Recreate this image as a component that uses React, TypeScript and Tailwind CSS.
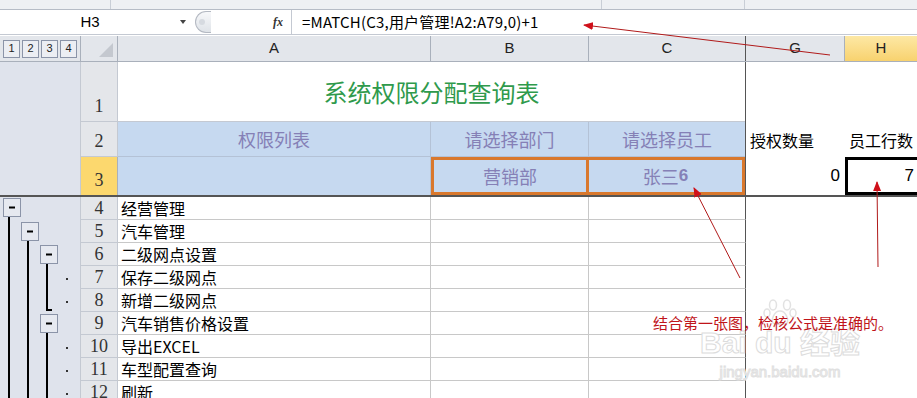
import React from 'react';

const cjk = { fontFamily: '"Noto Sans CJK SC", "Liberation Sans", sans-serif' };
const serif = { fontFamily: '"Liberation Serif", "Noto Sans CJK SC", serif' };
const sans = { fontFamily: '"Liberation Sans", "Noto Sans CJK SC", sans-serif' };

const rows = [
  { n: 4, text: '经营管理' },
  { n: 5, text: '汽车管理' },
  { n: 6, text: '二级网点设置' },
  { n: 7, text: '保存二级网点' },
  { n: 8, text: '新增二级网点' },
  { n: 9, text: '汽车销售价格设置' },
  { n: 10, text: '导出EXCEL' },
  { n: 11, text: '车型配置查询' },
  { n: 12, text: '刷新' },
];

function OutlineTree() {
  // outline (group) symbols for rows 4..12, drawn as one picture
  const box = (x: number, y: number) => (
    <g key={`${x}-${y}`}>
      <rect x={x + 0.5} y={y + 0.5} width={17} height={18} fill="#e6e9f0" stroke="#8b94a8" />
      <line x1={x + 6} y1={y + 9.5} x2={x + 12} y2={y + 9.5} stroke="#000" strokeWidth={2} />
    </g>
  );
  const dot = (y: number) => <rect key={y} x={66} y={y} width={2} height={2} fill="#333" />;
  return (
    <svg width={81} height={203} className="block">
      <line x1={9} y1={20} x2={9} y2={203} stroke="#000" strokeWidth={2} />
      <line x1={28} y1={44} x2={28} y2={203} stroke="#000" strokeWidth={2} />
      <polyline points="47,67 47,113 52,113" fill="none" stroke="#000" strokeWidth={2} />
      <line x1={47} y1={136} x2={47} y2={203} stroke="#000" strokeWidth={2} />
      {box(3, 1)}
      {box(21, 25)}
      {box(40, 48)}
      {box(40, 117)}
      {[81, 104, 150, 173, 196].map(dot)}
    </svg>
  );
}

export default function App() {
  return (
    <div className="relative w-[917px] h-[398px] overflow-hidden bg-white" style={cjk}>
      {/* ribbon remnant */}
      <div className="flex h-[10px] bg-[#eef0f3] border-b border-[#b6bcc6]">
        <div className="w-[111px] border-r border-[#c9ced6]" />
        <div className="w-[491px] border-r border-[#c9ced6]" />
        <div className="w-[143px] border-r border-[#c9ced6]" />
      </div>

      {/* formula bar */}
      <div className="flex h-[25px] items-center bg-white border-b border-[#c4c9d2]">
        <div className="flex w-[195px] items-center">
          <span className="w-[180px] text-center text-[15px] text-black" style={sans}>H3</span>
          <span className="w-0 h-0 border-l-[3px] border-r-[3px] border-t-[4px] border-l-transparent border-r-transparent border-t-[#444]" />
        </div>
        <div className="flex w-[97px] h-full items-center border-r border-[#c4c9d2]">
          <div className="w-[16px] h-[22px] rounded-l-full border border-r-0 border-[#b4b9c2] bg-gradient-to-b from-[#f7f8fa] to-[#dfe3e8] flex items-center pl-[3px]">
            <span className="w-[6px] h-[6px] rounded-full bg-[#d6dae0]" />
          </div>
          <span className="ml-auto mr-[8px] text-[12px] italic font-bold text-[#333]" style={serif}>fx</span>
        </div>
        <span className="pl-[10px] text-[15px] text-black tracking-[0.2px]">=MATCH(C3,用户管理!A2:A79,0)+1</span>
      </div>

      {/* column headers */}
      <div className="flex h-[26px] mt-[1px] bg-[#e3e6eb] border-b border-[#a9b0bb] text-[15px] text-[#222]" style={sans}>
        <div className="flex w-[81px] items-center gap-[2px] pl-[3px] border-r border-[#a9b0bb]">
          {[1, 2, 3, 4].map((l) => (
            <span key={l} className="flex w-[17px] h-[18px] items-center justify-center border border-[#8b94a8] bg-[#eceef3] text-[11px]">{l}</span>
          ))}
        </div>
        <div className="relative w-[37px] border-r border-[#a9b0bb]">
          <span className="absolute right-[4px] bottom-[4px] w-0 h-0 border-l-[14px] border-l-transparent border-b-[14px] border-b-[#c4c8cf]" />
        </div>
        <div className="flex w-[313px] items-center justify-center border-r border-[#a9b0bb]">A</div>
        <div className="flex w-[158px] items-center justify-center border-r border-[#a9b0bb]">B</div>
        <div className="flex w-[157px] items-center justify-center border-r border-[#555]">C</div>
        <div className="flex w-[99px] items-center justify-center border-r border-[#a9b0bb]">G</div>
        <div className="flex flex-1 items-center justify-center bg-gradient-to-b from-[#fde8a4] to-[#f8d26e]">H</div>
      </div>

      {/* rows 1-3 */}
      <div className="flex">
        <div className="w-[81px] bg-[#dfe3ec] border-r border-[#c4c9d2]" />
        <div className="w-[37px] flex flex-col text-[18px] text-[#333]" style={serif}>
          <div className="h-[60px] flex items-end justify-center pb-[1px] bg-[#e4e6ea] border-b border-r border-[#c4c9d2]">1</div>
          <div className="h-[35px] flex items-end justify-center pb-[1px] bg-[#e4e6ea] border-b border-r border-[#c4c9d2]">2</div>
          <div className="h-[38px] flex items-end justify-center pb-[1px] bg-[#fcd86e] border-r border-[#a9b0bb]">3</div>
        </div>
        <div className="w-[628px] flex flex-col border-r border-[#555]">
          <div className="h-[60px] flex items-center justify-center text-[24px] text-[#2f9a4c] border-b border-[#c4c9d2]">系统权限分配查询表</div>
          <div className="h-[35px] flex bg-[#c6d9f0] text-[18px] text-[#8580b6] border-b border-[#b4c2d6]">
            <div className="w-[313px] flex items-center justify-center border-r border-[#b4c2d6]">权限列表</div>
            <div className="w-[158px] flex items-center justify-center border-r border-[#b4c2d6]">请选择部门</div>
            <div className="flex-1 flex items-center justify-center">请选择员工</div>
          </div>
          <div className="h-[38px] flex bg-[#c6d9f0] text-[18px] text-[#8580b6]">
            <div className="w-[313px] border-r border-[#b4c2d6]" />
            <div className="w-[158px] flex items-center justify-center border-[3px] border-[#d9782d]">营销部</div>
            <div className="flex-1 flex items-center justify-center border-[3px] border-l-0 border-[#d9782d]">
              张三<span className="font-bold text-[17px]" style={sans}>6</span>
            </div>
          </div>
        </div>
        <div className="flex-1 flex flex-col text-[16px] text-black">
          <div className="h-[60px]" />
          <div className="h-[35px] flex items-center">
            <div className="w-[99px] pl-[4px]">授权数量</div>
            <div className="flex-1 pl-[4px]">员工行数</div>
          </div>
          <div className="h-[38px] flex items-center text-[17px]" style={sans}>
            <div className="w-[99px] text-right pr-[5px]">0</div>
            <div className="flex-1 h-full flex items-center justify-end pr-[3px] border-[3px] border-r-0 border-black">7</div>
          </div>
        </div>
      </div>

      {/* freeze line */}
      <div className="h-[2px] bg-[#555]" />

      {/* rows 4-12 */}
      <div className="flex">
        <div className="w-[81px] bg-[#dfe3ec] border-r border-[#c4c9d2]">
          <OutlineTree />
        </div>
        <div className="flex flex-col">
          {rows.map((r) => (
            <div key={r.n} className="flex h-[23px]">
              <div className="w-[37px] flex items-center justify-center bg-[#e4e6ea] border-b border-r border-[#c4c9d2] text-[18px] text-[#333]" style={serif}>{r.n}</div>
              <div className="w-[313px] flex items-center pl-[3px] border-b border-r border-[#c8c8c8] text-[16px] text-black">{r.text}</div>
              <div className="w-[158px] border-b border-r border-[#c8c8c8]" />
              <div className="w-[157px] border-b border-r border-[#c8c8c8] border-r-[#555]" />
            </div>
          ))}
        </div>
      </div>

      {/* baidu watermark */}
      <div className="absolute left-[700px] top-[298px] flex flex-col items-center pointer-events-none" style={sans}>
        <svg width={34} height={28} className="mb-[2px]">
          <g fill="none" stroke="#e2e2e2" strokeWidth={1.5}>
            <ellipse cx={10} cy={7} rx={3.5} ry={5} />
            <ellipse cx={24} cy={7} rx={3.5} ry={5} />
            <ellipse cx={4} cy={15} rx={3} ry={4} />
            <ellipse cx={30} cy={15} rx={3} ry={4} />
            <path d="M17 13 C11 13 8 22 10 25 C12 27 22 27 24 25 C26 22 23 13 17 13 Z" />
          </g>
        </svg>
        <span className="text-[30px] font-bold leading-none text-white [-webkit-text-stroke:1px_#dcdcdc]">Bai du 经验</span>
        <span className="mt-[6px] text-[15px] leading-none text-white [-webkit-text-stroke:1px_#e0e0e0]">jingyan.baidu.com</span>
      </div>

      {/* red note */}
      <div className="absolute left-[653px] top-[315px] text-[15px] leading-none text-[#c0141a] whitespace-nowrap">结合第一张图，检核公式是准确的。</div>

      {/* annotation arrows */}
      <svg className="absolute inset-0 pointer-events-none" width={917} height={398}>
        <defs>
          <marker id="ah" markerWidth="10" markerHeight="8" refX="9" refY="4" orient="auto" markerUnits="userSpaceOnUse">
            <path d="M0,0 L10,4 L0,8 Z" fill="#d0101a" />
          </marker>
        </defs>
        <line x1={830} y1={55} x2={584} y2={25} stroke="#b01a1a" strokeWidth={1} markerEnd="url(#ah)" />
        <line x1={740} y1={278} x2={694} y2={188} stroke="#b01a1a" strokeWidth={1} markerEnd="url(#ah)" />
        <line x1={878} y1={267} x2={877} y2={182} stroke="#b01a1a" strokeWidth={1} markerEnd="url(#ah)" />
      </svg>
    </div>
  );
}
